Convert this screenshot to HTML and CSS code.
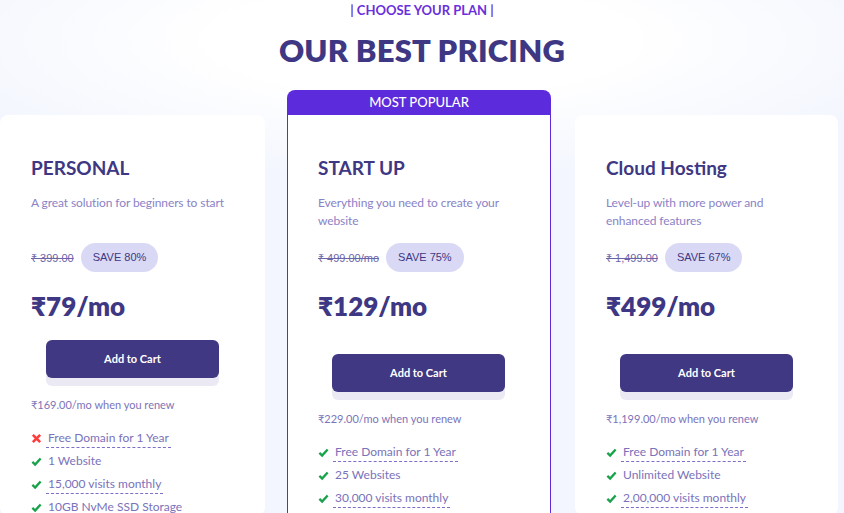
FILE: index.html
```html
<!DOCTYPE html>
<html lang="en">
<head>
    <meta charset="UTF-8">
    <title>Pricing</title>
    <link rel="stylesheet" href="styles.css">
</head>
<body>
    <section class="pricing">
        <div class="pricing-head">
            <p class="eyebrow">| CHOOSE YOUR PLAN |</p>
            <h1 class="title">OUR BEST PRICING</h1>
        </div>

        <div class="plans">
            <!-- personal -->
            <div class="plan-col">
                <div class="plan-card plan-card--basic">
                    <h2 class="plan-name">PERSONAL</h2>
                    <p class="plan-desc">A great solution for beginners to start</p>
                    <div class="plan-old">
                        <s>₹ 399.00</s>
                        <span class="save">SAVE 80%</span>
                    </div>
                    <div class="plan-price">₹79/mo</div>
                    <a href="" class="cart-btn">Add to Cart</a>
                    <p class="renew">₹169.00/mo when you renew</p>
                    <ul class="features">
                        <li><svg class="ico no" viewBox="0 0 12 12"><path d="M2 2 L10 10 M10 2 L2 10"/></svg><span class="tip">Free Domain for 1 Year</span></li>
                        <li><svg class="ico yes" viewBox="0 0 12 12"><path d="M1.5 6.5 L4.5 9.3 L10.5 2.8"/></svg><span>1 Website</span></li>
                        <li><svg class="ico yes" viewBox="0 0 12 12"><path d="M1.5 6.5 L4.5 9.3 L10.5 2.8"/></svg><span class="tip">15,000 visits monthly</span></li>
                        <li><svg class="ico yes" viewBox="0 0 12 12"><path d="M1.5 6.5 L4.5 9.3 L10.5 2.8"/></svg><span>10GB NvMe SSD Storage</span></li>
                    </ul>
                </div>
            </div>

            <!-- start up -->
            <div class="plan-col">
                <div class="popular">MOST POPULAR</div>
                <div class="plan-card plan-card--hot">
                    <h2 class="plan-name">START UP</h2>
                    <p class="plan-desc">Everything you need to create your<br>website</p>
                    <div class="plan-old">
                        <s>₹ 499.00/mo</s>
                        <span class="save">SAVE 75%</span>
                    </div>
                    <div class="plan-price">₹129/mo</div>
                    <a href="" class="cart-btn">Add to Cart</a>
                    <p class="renew">₹229.00/mo when you renew</p>
                    <ul class="features">
                        <li><svg class="ico yes" viewBox="0 0 12 12"><path d="M1.5 6.5 L4.5 9.3 L10.5 2.8"/></svg><span class="tip">Free Domain for 1 Year</span></li>
                        <li><svg class="ico yes" viewBox="0 0 12 12"><path d="M1.5 6.5 L4.5 9.3 L10.5 2.8"/></svg><span>25 Websites</span></li>
                        <li><svg class="ico yes" viewBox="0 0 12 12"><path d="M1.5 6.5 L4.5 9.3 L10.5 2.8"/></svg><span class="tip">30,000 visits monthly</span></li>
                        <li><svg class="ico yes" viewBox="0 0 12 12"><path d="M1.5 6.5 L4.5 9.3 L10.5 2.8"/></svg><span>50GB NvMe SSD Storage</span></li>
                    </ul>
                </div>
            </div>

            <!-- cloud -->
            <div class="plan-col">
                <div class="plan-card">
                    <h2 class="plan-name">Cloud Hosting</h2>
                    <p class="plan-desc">Level-up with more power and<br>enhanced features</p>
                    <div class="plan-old">
                        <s>₹ 1,499.00</s>
                        <span class="save">SAVE 67%</span>
                    </div>
                    <div class="plan-price">₹499/mo</div>
                    <a href="" class="cart-btn">Add to Cart</a>
                    <p class="renew">₹1,199.00/mo when you renew</p>
                    <ul class="features">
                        <li><svg class="ico yes" viewBox="0 0 12 12"><path d="M1.5 6.5 L4.5 9.3 L10.5 2.8"/></svg><span class="tip">Free Domain for 1 Year</span></li>
                        <li><svg class="ico yes" viewBox="0 0 12 12"><path d="M1.5 6.5 L4.5 9.3 L10.5 2.8"/></svg><span>Unlimited Website</span></li>
                        <li><svg class="ico yes" viewBox="0 0 12 12"><path d="M1.5 6.5 L4.5 9.3 L10.5 2.8"/></svg><span class="tip">2,00,000 visits monthly</span></li>
                        <li><svg class="ico yes" viewBox="0 0 12 12"><path d="M1.5 6.5 L4.5 9.3 L10.5 2.8"/></svg><span>200GB NvMe SSD Storage</span></li>
                    </ul>
                </div>
            </div>
        </div>
    </section>
</body>
</html>
```

FILE: styles.css
```css
* {
    margin: 0;
    padding: 0;
    box-sizing: border-box;
    list-style: none;
}
html, body {
    height: 100%;
    overflow: hidden;
}
body {
    font-family: Lato, "Noto Sans", sans-serif;
    background: radial-gradient(ellipse 520px 140px at 422px 40px, #ffffff 40%, rgba(255,255,255,0) 100%), #f3f6fe;
    color: #3f3782;
}
.pricing-head {
    text-align: center;
    padding-top: 2px;
}
.eyebrow {
    font-size: 13px;
    line-height: 16px;
    font-weight: 700;
    color: #6a2fdc;
}
.title {
    margin-top: 14px;
    font-size: 31px;
    line-height: 36px;
    font-weight: 800;
    color: #3e3783;
    letter-spacing: 0.2px;
}

/* cards */
.plans {
    display: grid;
    grid-template-columns: 265px 264px 265px;
    column-gap: 22px;
    margin-top: 22px;
}
.plans .plan-col:last-child {
    margin-left: 2px;
}
.plan-col {
    display: flex;
    flex-direction: column;
    justify-content: flex-end;
}
.popular {
    height: 25px;
    line-height: 24px;
    background: #5c2bdc;
    color: #fff;
    font-size: 13px;
    font-weight: 500;
    text-align: center;
    border-radius: 8px 8px 0 0;
}
.plan-card {
    background: #fff;
    border-radius: 8px;
    padding: 41px 31px 0;
    height: 400px;
}
.plan-card--hot {
    border: 1px solid #5c2bdc;
    border-top: 0;
    border-radius: 0;
    padding-left: 30px;
}
.plan-name {
    font-size: 19px;
    line-height: 24px;
    font-weight: 700;
    color: #3e3783;
}
.plan-desc {
    margin-top: 14px;
    min-height: 36px;
    font-size: 12px;
    line-height: 18px;
    color: #8a82c6;
    white-space: nowrap;
    letter-spacing: -0.1px;
}
.plan-old {
    margin-top: 13px;
    display: flex;
    align-items: center;
    gap: 7px;
    font-family: "Liberation Sans", Arial, sans-serif;
    font-size: 11px;
}
.plan-old s {
    color: #6c64a8;
}
.save {
    background: #d9d9f6;
    color: #3e3783;
    border-radius: 15px;
    height: 29px;
    line-height: 29px;
    padding: 0 12px;
}
.plan-price {
    margin-top: 18px;
    font-size: 26px;
    line-height: 32px;
    font-weight: 800;
    color: #3e3783;
    margin-bottom: 32px;
}
.plan-card--basic .plan-price {
    margin-bottom: 18px;
}
.cart-btn {
    display: block;
    width: 173px;
    height: 38px;
    margin: 0 auto;
    line-height: 38px;
    text-align: center;
    background: #403883;
    color: #fff;
    font-size: 11px;
    font-weight: 700;
    text-decoration: none;
    border-radius: 6px;
    box-shadow: 0 8px 0 #ebe9f4;
}
.renew {
    margin-top: 19px;
    font-size: 11px;
    line-height: 16px;
    color: #7c74b9;
}
.features {
    margin-top: 14px;
}
.features li {
    display: flex;
    align-items: center;
    height: 23px;
    font-size: 12px;
    color: #7a72ba;
}
.ico {
    width: 11px;
    height: 11px;
    margin-right: 4px;
    fill: none;
    stroke-width: 2.6;
}
.ico.yes {
    stroke: #18a24a;
}
.ico.no {
    stroke: #ff3b3b;
    stroke-width: 2.8;
}
.features span {
    padding: 0 2px 1px;
    line-height: 16px;
}
.features .tip {
    border-bottom: 1px dashed #7b6fc8;
}
```
